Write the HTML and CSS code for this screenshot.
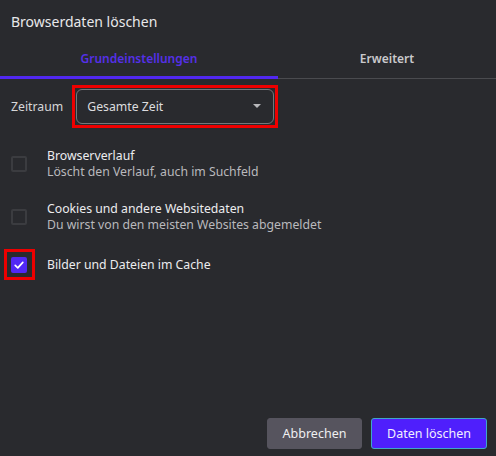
FILE: index.html
```html
<!DOCTYPE html>
<html lang="de">
<head>
  <meta charset="utf-8">
  <title>Browserdaten löschen</title>
  <link rel="stylesheet" href="styles.css">
</head>
<body>
<div class="dialog">
  <div class="dlg-title">Browserdaten löschen</div>

  <div class="tabs">
    <div class="tab active">Grundeinstellungen</div>
    <div class="tab">Erweitert</div>
  </div>

  <div class="range-row">
    <span class="range-label">Zeitraum</span>
    <div class="mark mark-select">
      <div class="select">
        <span>Gesamte Zeit</span>
        <span class="caret"></span>
      </div>
    </div>
  </div>

  <div class="option first">
    <span class="box"></span>
    <div class="opt-text">
      <div class="opt-name">Browserverlauf</div>
      <div class="opt-desc">Löscht den Verlauf, auch im Suchfeld</div>
    </div>
  </div>

  <div class="option">
    <span class="box"></span>
    <div class="opt-text">
      <div class="opt-name">Cookies und andere Websitedaten</div>
      <div class="opt-desc">Du wirst von den meisten Websites abgemeldet</div>
    </div>
  </div>

  <div class="option single">
    <div class="mark mark-box">
      <span class="box checked">
        <svg width="12" height="12" viewBox="0 0 12 12"><path d="M2.2 6.4 L4.8 8.8 L9.8 3.4" fill="none" stroke="#fff" stroke-width="1.7" stroke-linecap="round" stroke-linejoin="round"/></svg>
      </span>
    </div>
    <div class="opt-text">
      <div class="opt-name">Bilder und Dateien im Cache</div>
    </div>
  </div>

  <div class="actions">
    <button class="btn btn-cancel">Abbrechen</button>
    <button class="btn btn-ok">Daten löschen</button>
  </div>
</div>
</body>
</html>
```

FILE: styles.css
```css
html, body {
  margin: 0;
  padding: 0;
  background: #292a2e;
}

.dialog {
  height: 456px;
  display: flex;
  flex-direction: column;
  font-family: "Segoe UI", "Noto Sans", sans-serif;
  color: #e8e8ea;
  box-sizing: border-box;
}

.dlg-title {
  font-size: 14px;
  padding: 12px 0 0 11px;
  height: 29px;
  box-sizing: border-box;
  height: 41px;
}

.tabs {
  display: flex;
  border-bottom: 1px solid #4a4b4f;
}

.tab {
  font-size: 12px;
  font-weight: 600;
  color: #c9c9cc;
  text-align: center;
  height: 37px;
  line-height: 35px;
  width: 218px;
}

.tab.active {
  width: 278px;
  color: #5530e8;
  box-shadow: inset 0 -3px 0 #5128f0;
  margin-bottom: -1px;
  height: 38px;
}

.range-row {
  display: flex;
  align-items: center;
  margin-top: 6px;
  padding-left: 11px;
  gap: 9px;
}

.range-label {
  font-size: 12.25px;
  color: #d6d6d8;
}

/* red highlight frames */
.mark {
  border: 3px solid #ee0000;
}

.mark-select {
  padding: 1px;
}

.mark-box {
  padding: 5px 5px 4px 4px;
  margin: -8px -8px -7px -7px;
  display: flex;
}

.select {
  width: 198px;
  height: 35px;
  box-sizing: border-box;
  border: 1px solid #76777b;
  border-radius: 6px;
  display: flex;
  align-items: center;
  justify-content: space-between;
  padding: 0 12px 0 10px;
  font-size: 12.25px;
  color: #dcdcde;
}

.caret {
  width: 0;
  height: 0;
  border-left: 4px solid transparent;
  border-right: 4px solid transparent;
  border-top: 4px solid #b8b8bb;
  margin-top: -2px;
}

.option {
  display: flex;
  align-items: center;
  padding-left: 11px;
  margin-top: 21px;
}

.option.first {
  margin-top: 20px;
}

.option.single {
  margin-top: 24px;
}

.box {
  width: 16px;
  height: 16px;
  box-sizing: border-box;
  border: 2px solid #3b3c40;
  border-radius: 2px;
  flex-shrink: 0;
  display: flex;
  align-items: center;
  justify-content: center;
}

.box.checked {
  background: #5128f5;
  border-color: #5128f5;
}

.opt-text {
  margin-left: 20px;
  font-size: 12.25px;
  line-height: 16px;
}

.opt-name {
  color: #ececee;
}

.opt-desc {
  color: #b9b9bd;
}

.actions {
  margin-top: auto;
  display: flex;
  justify-content: flex-end;
  gap: 9px;
  padding: 0 9px 7px 0;
}

.btn {
  height: 31px;
  border-radius: 3px;
  font-family: inherit;
  font-size: 12.5px;
  padding: 0;
  cursor: pointer;
}

.btn-cancel {
  width: 95px;
  background: #56545e;
  border: 1px solid #56545e;
  color: #efeff1;
}

.btn-ok {
  width: 116px;
  background: #4f1ffc;
  border: 1px solid #3fa6c8;
  color: #f2f0ff;
}
```
